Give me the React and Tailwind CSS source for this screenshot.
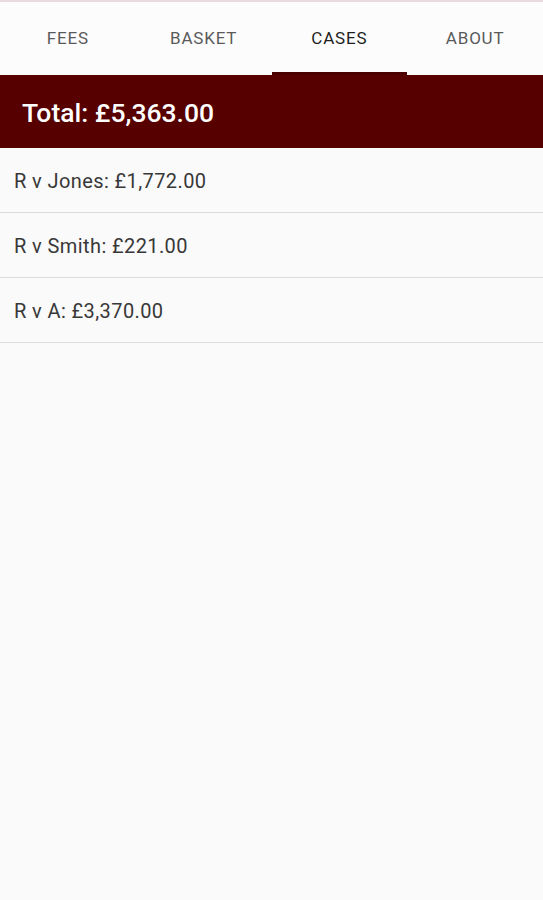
import { useState } from 'react';

// 案件ごとの手数料一覧
const cases = [
  { name: 'R v Jones', fee: '£1,772.00' },
  { name: 'R v Smith', fee: '£221.00' },
  { name: 'R v A', fee: '£3,370.00' },
];

const tabs = ['FEES', 'BASKET', 'CASES', 'ABOUT'];

export default function App() {
  const [active, setActive] = useState('CASES');

  return (
    <div className="min-h-[900px] bg-[#fafafa] font-['Roboto',sans-serif]">
      <div className="h-[2px] bg-[#ead9dd]" />
      {/* タブ */}
      <nav className="grid grid-cols-4 h-[73px] bg-[#fcfcfc]">
        {tabs.map((t) => (
          <button
            key={t}
            onClick={() => setActive(t)}
            className="relative flex items-center justify-center pt-[1px] text-[17px] tracking-[0.8px]"
          >
            <span className={active === t ? 'text-[#1f1f1f]' : 'text-[#5a5a5a]'}>{t}</span>
            {active === t && (
              <span className="absolute left-0 right-0 bottom-0 h-[3px] bg-[#4a0000]" />
            )}
          </button>
        ))}
      </nav>
      {/* 合計 */}
      <div className="h-[73px] bg-[#560000] flex items-center px-[22px] pt-[3px]">
        <span className="text-white text-[26.5px] font-medium">Total: £5,363.00</span>
      </div>
      {/* 一覧 */}
      <ul>
        {cases.map((c) => (
          <li
            key={c.name}
            className="h-[65px] flex items-center px-[14px] pt-[1px] border-b border-[#dcdcdc] text-[20px] tracking-[0.4px] text-[#383838]"
          >
            {c.name}: {c.fee}
          </li>
        ))}
      </ul>
    </div>
  );
}
